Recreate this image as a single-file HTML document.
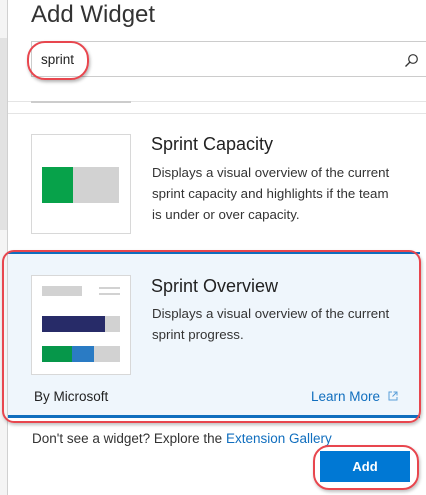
<!DOCTYPE html>
<html><head><style>
*{margin:0;padding:0;box-sizing:border-box}
body{width:426px;height:495px;overflow:hidden;background:#fff;font-family:"Liberation Sans",sans-serif;color:#333;position:relative}
.a{position:absolute}
.t{white-space:nowrap}
</style></head><body>
<div class="a" style="left:0;top:0;width:7px;height:495px;background:#f4f4f4"></div>
<div class="a" style="left:0;top:38px;width:7px;height:192px;background:#e2e2e2"></div>
<div class="a" style="left:7px;top:0;width:1px;height:495px;background:#d0d0d0"></div>
<div class="a t" style="left:31px;top:1px;font-size:24px;color:#333">Add Widget</div>
<div class="a" style="left:31px;top:41px;width:400px;height:36px;border:1px solid #ccc;border-right:none"></div>
<div class="a t" style="left:41px;top:52px;font-size:13.5px;color:#222">sprint</div>
<div class="a" style="left:27px;top:41px;width:62px;height:39px;border:2.5px solid #e8464e;border-radius:18px;box-shadow:1px 2px 3px rgba(0,0,0,.3)"></div>
<svg class="a" style="left:404px;top:53px" width="15" height="15" viewBox="0 0 15 15"><circle cx="9" cy="6" r="4.3" fill="none" stroke="#333" stroke-width="1.2"/><line x1="6" y1="9" x2="1.5" y2="13.5" stroke="#333" stroke-width="1.3"/></svg>
<div class="a" style="left:8px;top:101px;width:418px;height:1px;background:#e4e4e4"></div>
<div class="a" style="left:31px;top:101px;width:100px;height:2px;background:#ccc"></div>
<div class="a" style="left:8px;top:113px;width:418px;height:1px;background:#e4e4e4"></div>
<div class="a" style="left:31px;top:134px;width:100px;height:100px;border:1px solid #d8d8d8"></div>
<div class="a" style="left:42px;top:167px;width:31px;height:36px;background:#07a24a"></div>
<div class="a" style="left:73px;top:167px;width:46px;height:36px;background:#d2d2d2"></div>
<div class="a t" style="left:151px;top:134px;font-size:18px;color:#222">Sprint Capacity</div>
<div class="a" style="left:152px;top:162px;font-size:13.3px;line-height:21px;color:#333;width:272px;white-space:nowrap">Displays a visual overview of the current<br>sprint capacity and highlights if the team<br>is under or over capacity.</div>
<div class="a" style="left:8px;top:252px;width:412px;height:166px;background:#eff6fc;border-top:2px solid #106ebe;border-bottom:3px solid #106ebe"></div>
<div class="a" style="left:2px;top:250px;width:419px;height:173px;border:2.5px solid #e8464e;border-radius:12px;box-shadow:1px 2px 3px rgba(0,0,0,.25)"></div>
<div class="a" style="left:31px;top:275px;width:100px;height:100px;border:1px solid #d8d8d8;background:#fff"></div>
<div class="a" style="left:42px;top:286px;width:40px;height:10px;background:#d2d2d2"></div>
<div class="a" style="left:99px;top:287px;width:21px;height:2px;background:#d2d2d2"></div>
<div class="a" style="left:99px;top:293px;width:21px;height:2px;background:#d2d2d2"></div>
<div class="a" style="left:42px;top:316px;width:63px;height:16px;background:#272b68"></div>
<div class="a" style="left:105px;top:316px;width:15px;height:16px;background:#d2d2d2"></div>
<div class="a" style="left:42px;top:346px;width:30px;height:16px;background:#06974a"></div>
<div class="a" style="left:72px;top:346px;width:22px;height:16px;background:#2a7bc4"></div>
<div class="a" style="left:94px;top:346px;width:26px;height:16px;background:#d2d2d2"></div>
<div class="a t" style="left:151px;top:276px;font-size:18px;color:#222">Sprint Overview</div>
<div class="a" style="left:152px;top:303px;font-size:13.3px;line-height:21px;color:#333;width:272px;white-space:nowrap">Displays a visual overview of the current<br>sprint progress.</div>
<div class="a t" style="left:34px;top:389px;font-size:13.5px;color:#222">By Microsoft</div>
<div class="a t" style="left:311px;top:389px;font-size:13.5px;color:#106ebe">Learn More</div>
<svg class="a" style="left:388px;top:391px" width="10" height="10" viewBox="0 0 10 10"><path d="M4 1H1v8h8V6M5.5 1H9v3.5M9 1L4.5 5.5" fill="none" stroke="#5a9fd8" stroke-width="1"/></svg>
<div class="a t" style="left:32px;top:431px;font-size:13.5px;color:#333">Don't see a widget? Explore the <span style="color:#106ebe">Extension Gallery</span></div>
<div class="a" style="left:320px;top:451px;width:90px;height:31px;background:#0078d4;color:#fff;font-weight:bold;font-size:13px;text-align:center;line-height:31px">Add</div>
<div class="a" style="left:313px;top:445px;width:106px;height:45px;border:2.5px solid #e8464e;border-radius:16px;box-shadow:1px 2px 3px rgba(0,0,0,.25)"></div>
</body></html>
